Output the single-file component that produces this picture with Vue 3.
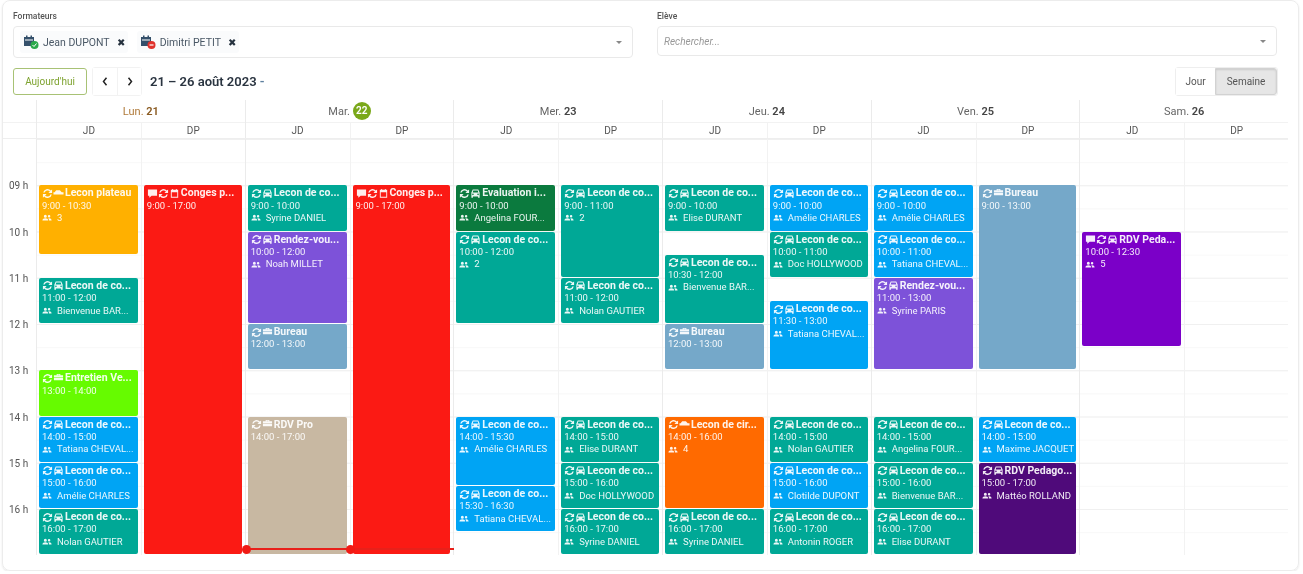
<script setup>
const START = 8
const HOUR = 46.25

const icons = {
  sync: 'M1.300 5A4.800 4.800 0 0 1 9.600 2.800L11 1.500V5.500H7L8.600 3.900A3.300 3.300 0 0 0 2.900 5zM10.700 7A4.800 4.800 0 0 1 2.400 9.200L1 10.500V6.500H5L3.400 8.100A3.300 3.300 0 0 0 9.100 7z',
  car: 'M3 1.500H9L10.500 5V10.500H8.800V9.200H3.200V10.500H1.500V5zM3.600 2.700L2.900 4.800H9.100L8.400 2.700zM3.200 6A.9.9 0 1 0 3.200 7.800.9.9 0 0 0 3.200 6zM8.800 6A.9.9 0 1 0 8.800 7.800.9.9 0 0 0 8.800 6z',
  carside: 'M3.500 2.500H7.500L9.500 4.500H11.500V7H.5V4.500H1.800z',
  case: 'M4 1H8V2.500H11V4.800H1V2.500H4zM5 1.800V2.500H7V1.800zM1 5.500H11V8H1z',
  comment: 'M1 1.500H11V8.500H5L2.500 10.500V8.500H1z',
  cal: 'M2 2H3.500V1H4.500V2H7.500V1H8.500V2H10V10.500H2zM3 4.500V9.500H9V4.500z',
  users: 'M4 2A1.800 1.800 0 1 1 4 5.600 1.800 1.800 0 0 1 4 2zM8.500 2.500A1.500 1.500 0 1 1 8.500 5.500 1.500 1.500 0 0 1 8.500 2.500zM.5 9C.5 7.200 2.200 6.300 4 6.300S7.500 7.200 7.500 9zM8.500 9C8.500 8 8.200 7.200 7.700 6.500 9.600 6.100 11.500 7 11.500 9z',
}

const teal = '#00a896'
const blue = '#00a4f4'
const slate = '#75a8c9'
const violet = '#7d52d9'

const lesson = { title: 'Lecon de co...', icons: ['sync', 'car'] }
const bureau = { title: 'Bureau', icons: ['sync', 'case'], color: slate }
const conges = { title: 'Conges p...', time: '9:00 - 17:00', from: 9, to: 17, icons: ['comment', 'sync', 'cal'], color: '#fb1a14' }

const ev = (base, color, from, to, time, extra) => ({ ...base, color: color || base.color, from, to, time, ...extra })

const days = [
  {
    label: 'Lun.', num: '21', past: true,
    cols: [
      [
        ev({ title: 'Lecon plateau', icons: ['sync', 'carside'] }, '#ffb000', 9, 10.5, '9:00 - 10:30', { count: '3' }),
        ev(lesson, teal, 11, 12, '11:00 - 12:00', { person: 'Bienvenue BAR...' }),
        ev({ title: 'Entretien Ve...', icons: ['sync', 'case'] }, '#66fb00', 13, 14, '13:00 - 14:00'),
        ev(lesson, blue, 14, 15, '14:00 - 15:00', { person: 'Tatiana CHEVAL...' }),
        ev(lesson, blue, 15, 16, '15:00 - 16:00', { person: 'Amélie CHARLES' }),
        ev(lesson, teal, 16, 17, '16:00 - 17:00', { person: 'Nolan GAUTIER' }),
      ],
      [conges],
    ],
  },
  {
    label: 'Mar.', num: '22', today: true,
    cols: [
      [
        ev(lesson, teal, 9, 10, '9:00 - 10:00', { person: 'Syrine DANIEL' }),
        ev({ title: 'Rendez-vou...', icons: ['sync', 'car'] }, violet, 10, 12, '10:00 - 12:00', { person: 'Noah MILLET' }),
        ev(bureau, slate, 12, 13, '12:00 - 13:00'),
        ev({ title: 'RDV Pro', icons: ['sync', 'case'] }, '#c8b8a2', 14, 17, '14:00 - 17:00'),
      ],
      [conges],
    ],
  },
  {
    label: 'Mer.', num: '23',
    cols: [
      [
        ev({ title: 'Evaluation i...', icons: ['sync', 'car'] }, '#0b7a3e', 9, 10, '9:00 - 10:00', { person: 'Angelina FOUR...' }),
        ev(lesson, teal, 10, 12, '10:00 - 12:00', { count: '2' }),
        ev(lesson, blue, 14, 15.5, '14:00 - 15:30', { person: 'Amélie CHARLES' }),
        ev(lesson, blue, 15.5, 16.5, '15:30 - 16:30', { person: 'Tatiana CHEVAL...' }),
      ],
      [
        ev(lesson, teal, 9, 11, '9:00 - 11:00', { count: '2' }),
        ev(lesson, teal, 11, 12, '11:00 - 12:00', { person: 'Nolan GAUTIER' }),
        ev(lesson, teal, 14, 15, '14:00 - 15:00', { person: 'Elise DURANT' }),
        ev(lesson, teal, 15, 16, '15:00 - 16:00', { person: 'Doc HOLLYWOOD' }),
        ev(lesson, teal, 16, 17, '16:00 - 17:00', { person: 'Syrine DANIEL' }),
      ],
    ],
  },
  {
    label: 'Jeu.', num: '24',
    cols: [
      [
        ev(lesson, teal, 9, 10, '9:00 - 10:00', { person: 'Elise DURANT' }),
        ev(lesson, teal, 10.5, 12, '10:30 - 12:00', { person: 'Bienvenue BAR...' }),
        ev(bureau, slate, 12, 13, '12:00 - 13:00'),
        ev({ title: 'Lecon de cir...', icons: ['sync', 'carside'] }, '#ff6a00', 14, 16, '14:00 - 16:00', { count: '4' }),
        ev(lesson, teal, 16, 17, '16:00 - 17:00', { person: 'Syrine DANIEL' }),
      ],
      [
        ev(lesson, blue, 9, 10, '9:00 - 10:00', { person: 'Amélie CHARLES' }),
        ev(lesson, teal, 10, 11, '10:00 - 11:00', { person: 'Doc HOLLYWOOD' }),
        ev(lesson, blue, 11.5, 13, '11:30 - 13:00', { person: 'Tatiana CHEVAL...' }),
        ev(lesson, teal, 14, 15, '14:00 - 15:00', { person: 'Nolan GAUTIER' }),
        ev(lesson, blue, 15, 16, '15:00 - 16:00', { person: 'Clotilde DUPONT' }),
        ev(lesson, teal, 16, 17, '16:00 - 17:00', { person: 'Antonin ROGER' }),
      ],
    ],
  },
  {
    label: 'Ven.', num: '25',
    cols: [
      [
        ev(lesson, blue, 9, 10, '9:00 - 10:00', { person: 'Amélie CHARLES' }),
        ev(lesson, blue, 10, 11, '10:00 - 11:00', { person: 'Tatiana CHEVAL...' }),
        ev({ title: 'Rendez-vou...', icons: ['sync', 'car'] }, violet, 11, 13, '11:00 - 13:00', { person: 'Syrine PARIS' }),
        ev(lesson, teal, 14, 15, '14:00 - 15:00', { person: 'Angelina FOUR...' }),
        ev(lesson, teal, 15, 16, '15:00 - 16:00', { person: 'Bienvenue BAR...' }),
        ev(lesson, teal, 16, 17, '16:00 - 17:00', { person: 'Elise DURANT' }),
      ],
      [
        ev(bureau, slate, 9, 13, '9:00 - 13:00'),
        ev(lesson, blue, 14, 15, '14:00 - 15:00', { person: 'Maxime JACQUET' }),
        ev({ title: 'RDV Pedago...', icons: ['sync', 'car'] }, '#4f0a7a', 15, 17, '15:00 - 17:00', { person: 'Mattéo ROLLAND' }),
      ],
    ],
  },
  {
    label: 'Sam.', num: '26',
    cols: [
      [ev({ title: 'RDV Peda...', icons: ['comment', 'sync', 'car'] }, '#7b00c8', 10, 12.5, '10:00 - 12:30', { count: '5' })],
      [],
    ],
  },
]

const axis = ['', '09 h', '10 h', '11 h', '12 h', '13 h', '14 h', '15 h', '16 h']

const eventStyle = (e) => ({
  top: (e.from - START) * HOUR + 'px',
  height: (e.to - e.from) * HOUR - 1 + 'px',
  background: e.color,
})
</script>

<template>
  <div class="card">
    <div class="filters">
      <div class="field">
        <label>Formateurs</label>
        <div class="select tall">
          <span class="chip">
            <svg class="chip-ico" viewBox="0 0 16 14">
              <rect x="1" y="2" width="10" height="9" fill="#34506b" />
              <rect x="2" y="4.500" width="8" height="1" fill="#fff" />
              <rect x="3" y="0.500" width="1.500" height="3" fill="#34506b" />
              <rect x="7.500" y="0.500" width="1.500" height="3" fill="#34506b" />
              <circle cx="11.500" cy="10" r="4" fill="#2aa84a" />
              <path d="M9.500 10l1.500 1.500 2.500-3" fill="none" stroke="#fff" stroke-width="1" />
            </svg>
            Jean DUPONT
            <span class="chip-x">✖</span>
          </span>
          <span class="chip">
            <svg class="chip-ico" viewBox="0 0 16 14">
              <rect x="1" y="2" width="10" height="9" fill="#34506b" />
              <rect x="2" y="4.500" width="8" height="1" fill="#fff" />
              <rect x="3" y="0.500" width="1.500" height="3" fill="#34506b" />
              <rect x="7.500" y="0.500" width="1.500" height="3" fill="#34506b" />
              <circle cx="11.500" cy="10" r="4" fill="#e0322c" />
              <path d="M9.500 10h4" fill="none" stroke="#fff" stroke-width="1.200" />
            </svg>
            Dimitri PETIT
            <span class="chip-x">✖</span>
          </span>
          <span class="caret"></span>
        </div>
      </div>
      <div class="field">
        <label>Elève</label>
        <div class="select">
          <span class="placeholder">Rechercher...</span>
          <span class="caret"></span>
        </div>
      </div>
    </div>

    <div class="toolbar">
      <button class="today">Aujourd'hui</button>
      <div class="nav">
        <button>
          <svg viewBox="0 0 8 12" width="6" height="9"><path d="M6 1L2 6l4 5" fill="none" stroke="#222" stroke-width="2" /></svg>
        </button>
        <button>
          <svg viewBox="0 0 8 12" width="6" height="9"><path d="M2 1l4 5-4 5" fill="none" stroke="#222" stroke-width="2" /></svg>
        </button>
      </div>
      <h2>21 – 26 août 2023 <span class="dash">-</span></h2>
      <div class="views">
        <button>Jour</button>
        <button class="active">Semaine</button>
      </div>
    </div>

    <div class="calendar">
      <div class="head">
        <div class="axis-head"></div>
        <div v-for="d in days" :key="d.num" class="day-head">
          <div class="day-name" :class="{ past: d.past }">
            {{ d.label }} <b :class="{ badge: d.today }">{{ d.num }}</b>
          </div>
          <div class="res-row">
            <span>JD</span>
            <span>DP</span>
          </div>
        </div>
      </div>

      <div class="body">
        <div class="axis">
          <div v-for="(h, i) in axis" :key="i" class="axis-cell"><span>{{ h }}</span></div>
        </div>
        <div v-for="d in days" :key="d.num" class="day">
          <div v-for="(col, c) in d.cols" :key="c" class="col">
            <div
              v-for="(e, i) in col"
              :key="i"
              class="event"
              :style="eventStyle(e)"
            >
              <div class="ev-title">
                <svg v-for="ic in e.icons" :key="ic" class="ic" viewBox="0 0 12 12"><path :d="icons[ic]" /></svg>
                <span>{{ e.title }}</span>
              </div>
              <div class="ev-line">{{ e.time }}</div>
              <div v-if="e.person || e.count" class="ev-line ev-who">
                <svg class="ic small" viewBox="0 0 12 12"><path :d="icons.users" /></svg>
                <span>{{ e.person || e.count }}</span>
              </div>
            </div>
          </div>
          <div v-if="d.today" class="now">
            <i></i>
            <i class="mid"></i>
          </div>
        </div>
      </div>
    </div>
  </div>
</template>

<style>
html, body {
  margin: 0;
  background: #fff;
}
</style>

<style scoped>
.card {
  box-sizing: border-box;
  width: 1297px;
  height: 571px;
  margin-left: 2px;
  padding: 10px 9px 0 0;
  border: 1px solid #ececec;
  border-radius: 8px;
  box-shadow: 0 1px 2px rgba(0, 0, 0, 0.1);
  font-family: Roboto, "Liberation Sans", sans-serif;
  font-size: 10px;
  color: #444;
  filter: blur(0.5px);
}

.filters {
  display: grid;
  grid-template-columns: 620px 620px;
  column-gap: 24px;
  padding: 0 11px 0 10px;
}

.field label {
  display: block;
  height: 15px;
  font-size: 8.500px;
  font-weight: 500;
  color: #555;
}

.select {
  box-sizing: border-box;
  height: 30px;
  display: flex;
  align-items: center;
  gap: 9px;
  padding: 0 10px 0 6px;
  border: 1px solid #e9e9e9;
  border-radius: 4px;
  position: relative;
}

.select.tall {
  height: 32px;
}

.placeholder {
  font-style: italic;
  color: #999;
  font-size: 10px;
}

.chip {
  display: inline-flex;
  align-items: center;
  gap: 4px;
  height: 22px;
  padding: 0 3px 0 3px;
  background: #fafbfc;
  border-radius: 3px;
  font-size: 10.500px;
  color: #4a5866;
}

.chip-ico {
  width: 16px;
  height: 14px;
}

.chip-x {
  margin-left: 3px;
  font-size: 10px;
  color: #26323f;
}

.caret {
  margin-left: auto;
  width: 0;
  height: 0;
  border: 3px solid transparent;
  border-top: 3px solid #888;
  margin-top: 3px;
}

.toolbar {
  display: flex;
  align-items: center;
  height: 27px;
  margin-top: 10px;
  padding-left: 10px;
  padding-right: 11px;
}

button {
  font-family: inherit;
  font-size: 10px;
  background: #fff;
  cursor: pointer;
}

.today {
  box-sizing: border-box;
  width: 74px;
  height: 27px;
  padding: 0;
  border: 1px solid #a8c275;
  border-radius: 3px;
  color: #7da22e;
}

.nav {
  display: flex;
  margin-left: 5px;
  height: 27px;
  border: 1px solid #f2f2f2;
  border-radius: 3px;
}

.nav button {
  width: 24px;
  padding: 0;
  border: 0;
  display: flex;
  align-items: center;
  justify-content: center;
}

.nav button + button {
  border-left: 1px solid #f2f2f2;
}

h2 {
  margin: 0 0 0 8px;
  font-size: 13px;
  font-weight: 600;
  color: #2a3440;
}

.dash {
  color: #5d7f9e;
}

.views {
  margin-left: auto;
  display: flex;
  height: 27px;
  border: 1px solid #eee;
  border-radius: 3px;
}

.views button {
  padding: 0;
  border: 0;
  width: 39px;
  color: #555;
}

.views .active {
  width: 62px;
  background: #e6e6e6;
  box-shadow: inset 0 1px 2px rgba(0, 0, 0, 0.12);
  border: 1px solid #d2d2d2;
  border-radius: 0 3px 3px 0;
}

.calendar {
  margin-top: 5px;
  width: 1285px;
}

.head {
  display: flex;
  height: 39px;
  border-bottom: 1px solid #eeeeee;
  box-sizing: border-box;
}

.axis-head {
  width: 33px;
  flex: none;
  border-right: 1px solid #ebebeb;
  position: relative;
}

.axis-head::after {
  content: "";
  position: absolute;
  left: 0;
  right: 0;
  top: 22px;
  border-top: 1px solid #f2f2f2;
}

.day-head {
  flex: 1;
  border-right: 1px solid #ebebeb;
  text-align: center;
}

.day-head:last-child {
  border-right: 0;
}

.day-name {
  height: 22px;
  line-height: 24px;
  font-size: 11px;
  color: #666;
  border-bottom: 1px solid #f2f2f2;
  box-sizing: content-box;
}

.day-name b {
  font-weight: 600;
  color: #444;
}

.day-name.past {
  color: #b07a3a;
}

.day-name.past b {
  color: #8a5a20;
}

.badge {
  display: inline-block;
  width: 18px;
  height: 18px;
  line-height: 18px;
  border-radius: 50%;
  background: #7aa81a;
  color: #fff !important;
  font-size: 10px;
  vertical-align: 1px;
}

.res-row {
  display: grid;
  grid-template-columns: 1fr 1fr;
  font-size: 10px;
  line-height: 15px;
  color: #555;
}

.res-row span + span {
  border-left: 1px solid #f2f2f2;
}

.body {
  display: flex;
  height: 416.250px;
}

.axis {
  width: 33px;
  flex: none;
  border-right: 1px solid #ebebeb;
  box-sizing: content-box;
}

.axis-cell {
  height: 46.250px;
  position: relative;
  font-size: 10px;
  color: #555;
}

.axis-cell span {
  position: absolute;
  left: 6px;
  top: -5px;
}

.day {
  flex: 1;
  display: grid;
  grid-template-columns: 1fr 1fr;
  position: relative;
  border-right: 1px solid #ebebeb;
  background-image:
    linear-gradient(to bottom, #f0f0f0 1px, transparent 1px),
    linear-gradient(to bottom, #f8f8f8 1px, transparent 1px);
  background-size: 100% 46.250px, 100% 23.125px;
}

.day:last-child {
  border-right: 0;
}

.col {
  position: relative;
}

.col + .col {
  border-left: 1px solid #f2f2f2;
}

.event {
  position: absolute;
  left: 2px;
  right: 3px;
  box-sizing: border-box;
  padding: 2px 3px 1px;
  border-radius: 2px;
  color: rgba(255, 255, 255, 0.92);
  overflow: hidden;
  font-size: 9.500px;
  line-height: 12.400px;
}

.ev-title {
  display: flex;
  align-items: center;
  font-size: 10.500px;
  font-weight: 700;
  white-space: nowrap;
}

.ev-title span {
  margin-left: 1px;
}

.ic {
  width: 11px;
  height: 11px;
  flex: none;
  fill: currentColor;
}

.ev-line {
  white-space: nowrap;
}

.ev-who {
  display: flex;
  align-items: center;
  gap: 5px;
}

.ic.small {
  width: 10px;
  height: 10px;
}

.now {
  position: absolute;
  left: 0;
  right: -1px;
  top: 409px;
  border-top: 2px solid #e8201a;
}

.now i {
  position: absolute;
  left: -4px;
  top: -5px;
  width: 9px;
  height: 9px;
  border-radius: 50%;
  background: #f01a14;
}

.now .mid {
  left: calc(50% - 4px);
}
</style>
